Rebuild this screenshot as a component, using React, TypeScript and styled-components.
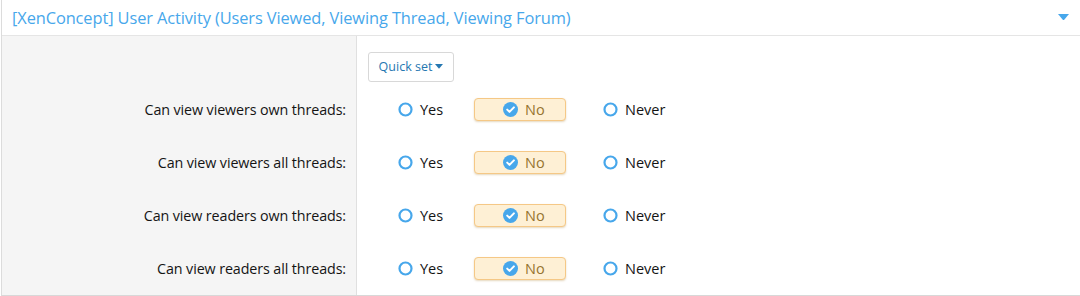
import React from 'react';
import styled, { createGlobalStyle } from 'styled-components';

const GlobalStyle = createGlobalStyle`
    html, body {
        margin: 0;
        padding: 0;
        background: #fff;
    }
    body {
        font-family: "Open Sans", "Noto Sans", sans-serif;
        width: 1080px;
        height: 296px;
        overflow: hidden;
    }
`

type Choice = 'yes' | 'no' | 'never'

type PermissionType = {
    label: string
    value: Choice
}

const permissions: PermissionType[] = [
    { label: 'Can view viewers own threads:', value: 'no' },
    { label: 'Can view viewers all threads:', value: 'no' },
    { label: 'Can view readers own threads:', value: 'no' },
    { label: 'Can view readers all threads:', value: 'no' },
]

const options: { key: Choice; text: string }[] = [
    { key: 'yes', text: 'Yes' },
    { key: 'no', text: 'No' },
    { key: 'never', text: 'Never' },
]

const Caret = ({ size = 8 }: { size?: number }) => (
    <svg width={size} height={size * 0.6} viewBox="0 0 10 6">
        <path d="M0 0 L10 0 L5 6 Z" fill="currentColor" />
    </svg>
)

const RadioRing = () => (
    <svg width="15" height="15" viewBox="0 0 15 15">
        <circle cx="7.5" cy="7.5" r="6" fill="#fff" stroke="#47a7eb" strokeWidth="2.2" />
    </svg>
)

const RadioChecked = () => (
    <svg width="15" height="15" viewBox="0 0 15 15">
        <circle cx="7.5" cy="7.5" r="7.5" fill="#47a7eb" />
        <path d="M4.2 7.6 L6.5 9.9 L10.9 5.4" fill="none" stroke="#fff" strokeWidth="2" strokeLinecap="round" strokeLinejoin="round" />
    </svg>
)

export default function App() {
    return (
        <>
            <GlobalStyle />
            <Block>
                <Header>
                    <Title>[XenConcept] User Activity (Users Viewed, Viewing Thread, Viewing Forum)</Title>
                    <HeaderCaret><Caret size={11} /></HeaderCaret>
                </Header>
                <Body>
                    <FormRow $first>
                        <Label />
                        <Controls>
                            <QuickSet>Quick set <Caret size={8} /></QuickSet>
                        </Controls>
                    </FormRow>
                    {permissions.map((p) => (
                        <FormRow key={p.label}>
                            <Label>{p.label}</Label>
                            <Controls>
                                <ChoiceList>
                                    {options.map((o) => (
                                        <Option key={o.key} $selected={p.value === o.key}>
                                            {p.value === o.key ? <RadioChecked /> : <RadioRing />}
                                            <span>{o.text}</span>
                                        </Option>
                                    ))}
                                </ChoiceList>
                            </Controls>
                        </FormRow>
                    ))}
                </Body>
            </Block>
        </>
    )
}

const Block = styled.div`
    width: 1079px;
    margin-left: 1px;
    box-sizing: border-box;
    border-left: 1px solid #dcdcdc;
    border-bottom: 1px solid #d8d8d8;
    display: flex;
    flex-direction: column;
`

const Header = styled.div`
    flex: none;
    height: 36px;
    box-sizing: border-box;
    border-bottom: 1px solid #e5e5e5;
    display: flex;
    align-items: center;
    padding: 0 11px 0 10px;
    background: #fff;
`

const Title = styled.h3`
    margin: 0;
    flex: 1;
    font-size: 16.4px;
    font-weight: 400;
    color: #47a7eb;
    letter-spacing: -0.1px;
    white-space: nowrap;
`

const HeaderCaret = styled.span`
    color: #47a7eb;
    display: flex;
    margin-top: -1px;
`

const Body = styled.div`
    display: flex;
    flex-direction: column;
`

const FormRow = styled.div<{ $first?: boolean }>`
    display: flex;
    flex: none;
    height: ${({ $first }) => ($first ? '47px' : '53px')};
`

const Label = styled.div`
    width: 355px;
    box-sizing: border-box;
    background: #f5f5f5;
    border-right: 1px solid #e0e0e0;
    display: flex;
    align-items: center;
    justify-content: flex-end;
    padding-right: 10px;
    font-size: 14.3px;
    color: #141414;
    letter-spacing: -0.1px;
`

const Controls = styled.div`
    flex: 1;
    display: flex;
    align-items: center;
    padding-left: 12px;
`

const QuickSet = styled.button`
    align-self: flex-end;
    margin-bottom: 1px;
    margin-left: -1px;
    height: 30px;
    width: 86px;
    box-sizing: border-box;
    border: 1px solid #d8d8d8;
    border-radius: 3px;
    background: #fff;
    color: #2577b1;
    font-family: inherit;
    font-size: 12.5px;
    display: flex;
    align-items: center;
    justify-content: center;
    gap: 3px;
    padding: 0 0 1px;
`

const ChoiceList = styled.div`
    display: grid;
    grid-template-columns: 105px 100px auto;
    align-items: center;
`

const Option = styled.label<{ $selected?: boolean }>`
    width: 92px;
    height: 23px;
    box-sizing: border-box;
    display: flex;
    align-items: center;
    gap: 7px;
    padding-left: 28px;
    border-radius: 4px;
    border: 1px solid ${({ $selected }) => ($selected ? '#f5c886' : 'transparent')};
    background: ${({ $selected }) => ($selected ? '#fef0d5' : 'transparent')};
    box-shadow: ${({ $selected }) => ($selected ? '0 1px 2px rgba(180, 140, 70, 0.35)' : 'none')};
    color: ${({ $selected }) => ($selected ? '#96742f' : '#141414')};
    font-size: 14.5px;

    svg {
        flex: none;
    }
`
